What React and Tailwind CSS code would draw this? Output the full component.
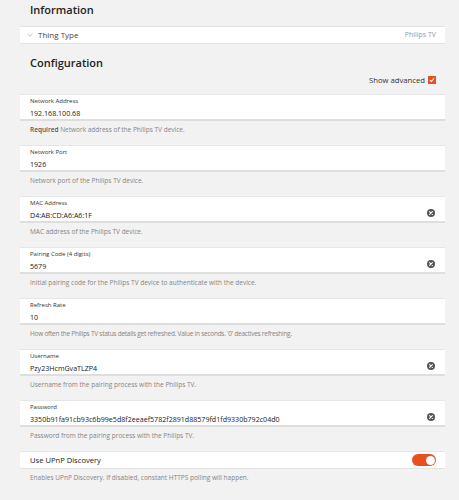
import React from "react";

const fields = [
  {
    label: "Network Address",
    value: "192.168.100.68",
    desc: (
      <>
        <span className="font-semibold text-[#555]">Required</span> Network address of the Philips TV device.
      </>
    ),
  },
  { label: "Network Port", value: "1926", desc: "Network port of the Philips TV device." },
  { label: "MAC Address", value: "D4:AB:CD:A6:A6:1F", desc: "MAC address of the Philips TV device.", clear: true },
  {
    label: "Pairing Code (4 digits)",
    value: "5679",
    desc: "Initial pairing code for the Philips TV device to authenticate with the device.",
    clear: true,
  },
  {
    label: "Refresh Rate",
    value: "10",
    desc: "How often the Philips TV status details get refreshed. Value in seconds. '0' deactives refreshing.",
    tight: true,
  },
  {
    label: "Username",
    value: "Pzy23HcmGvaTLZP4",
    desc: "Username from the pairing process with the Philips TV.",
    clear: true,
  },
  {
    label: "Password",
    value: "3350b91fa91cb93c6b99e5d8f2eeaef5782f2891d88579fd1fd9330b792c04d0",
    desc: "Password from the pairing process with the Philips TV.",
    clear: true,
  },
];

function ClearIcon() {
  return (
    <svg width="8" height="8" viewBox="0 0 8 8" className="block">
      <circle cx="4" cy="4" r="4" fill="#555" />
      <path d="M2.6 2.6 L5.4 5.4 M5.4 2.6 L2.6 5.4" stroke="#fff" strokeWidth="1.1" strokeLinecap="round" />
    </svg>
  );
}

function Field({ label, value, desc, clear, tight }) {
  return (
    <div>
      <div className="flex h-[27px] bg-white border-t border-[#e6e6e6] border-b-2 border-b-[#dedede]">
        <div className="flex-1 pl-[10px] pt-[2px]">
          <div className="text-[6px] leading-[8px] text-[#333]">{label}</div>
          <div className="mt-[3px] text-[7.1px] leading-[10px] text-[#222]">{value}</div>
        </div>
        {clear && (
          <div className="flex items-end pr-[10px] pb-[4px]">
            <ClearIcon />
          </div>
        )}
      </div>
      <div
        className={
          tight
            ? "h-[24px] pl-[10px] pt-[4px] text-[6.5px] leading-[10px] tracking-[-0.25px] text-[#858585]"
            : "h-[24px] pl-[10px] pt-[4px] text-[6.5px] leading-[10px] text-[#858585]"
        }
      >
        {desc}
      </div>
    </div>
  );
}

export default function App() {
  return (
    <div className="min-h-[500px] w-[459px] bg-[#f2f2f2] font-['Open_Sans',sans-serif]">
      <div className="ml-[20px] w-[425px]">
        <div className="h-[20px] pl-[10px] text-[11px] font-semibold leading-[20px] text-[#222]">Information</div>

        <div className="mt-[6px] flex h-[18px] items-center bg-white border-t border-[#e3e3e3] border-b border-b-[#e3e3e3] pl-[7px] pr-[9px]">
          <svg width="6" height="4" viewBox="0 0 6 4" className="block">
            <path d="M0.5 0.8 L3 3.2 L5.5 0.8" fill="none" stroke="#b8b8b8" strokeWidth="0.9" />
          </svg>
          <span className="ml-[5px] text-[8px] leading-[10px] text-[#444]">Thing Type</span>
          <span className="ml-auto text-[7px] leading-[10px] text-[#999]">Philips TV</span>
        </div>

        <div className="mt-[9px] h-[20px] pl-[10px] text-[11px] font-semibold leading-[20px] text-[#222]">Configuration</div>

        <div className="flex h-[14px] items-center justify-end pr-[9px]">
          <span className="text-[7.7px] leading-[10px] text-[#333]">Show advanced</span>
          <span className="ml-[3px] flex h-[8px] w-[8px] items-center justify-center bg-[#e8501e]">
            <svg width="6" height="6" viewBox="0 0 6 6" className="block">
              <path d="M1 3.1 L2.4 4.5 L5 1.4" fill="none" stroke="#fff" strokeWidth="1.1" />
            </svg>
          </span>
        </div>

        <div className="mt-[7px]">
          {fields.map((f) => (
            <Field key={f.label} {...f} />
          ))}

          <div className="flex h-[18px] items-center bg-white border-t border-[#e6e6e6] border-b border-b-[#e3e3e3] pl-[10px] pr-[9px]">
            <span className="text-[7.6px] leading-[10px] text-[#222]">Use UPnP Discovery</span>
            <span className="ml-auto flex h-[12px] w-[24px] items-center justify-end rounded-full bg-[#e8501e] pr-[1.5px]">
              <span className="h-[9px] w-[9px] rounded-full bg-white" />
            </span>
          </div>
          <div className="h-[24px] pl-[10px] pt-[4px] text-[6.5px] leading-[10px] text-[#858585]">
            Enables UPnP Discovery. If disabled, constant HTTPS polling will happen.
          </div>
        </div>
      </div>
    </div>
  );
}
